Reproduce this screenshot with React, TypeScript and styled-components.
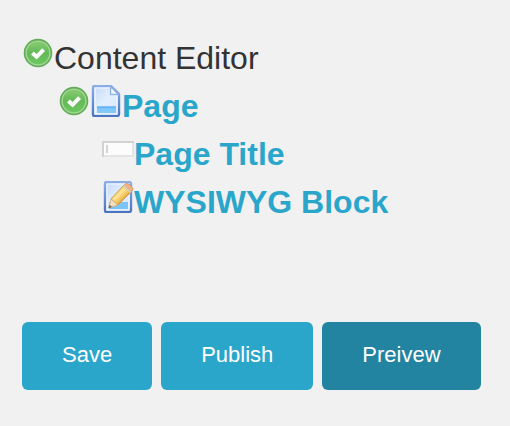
import React from "react";
import styled, { createGlobalStyle } from "styled-components";

const GlobalStyle = createGlobalStyle`
  * { box-sizing: border-box; }
  body {
    margin: 0;
    background: #f1f1f1;
    font-family: "Liberation Sans", Arial, sans-serif;
    color: #333333;
  }
`;

const Panel = styled.main`
  padding: 34px 22px 36px;
`;

const Tree = styled.ul`
  list-style: none;
  margin: 0;
  padding: 0;
  font-size: 32px;
  line-height: 48px;
`;

const Branch = styled(Tree)<{ $indent: number }>`
  padding-left: ${(p) => p.$indent}px;
`;

const Row = styled.div`
  display: flex;
  align-items: baseline;
  white-space: nowrap;
`;

const Icon = styled.svg`
  flex: none;
  width: 32px;
  height: 32px;
`;

const NodeLink = styled.a`
  color: #2ba6cb;
  font-weight: bold;
  text-decoration: none;
`;

const Actions = styled.div`
  display: flex;
  flex-wrap: wrap;
  gap: 9px;
  margin-top: 96px;
`;

const ActionButton = styled.button<{ $active?: boolean }>`
  border: 0;
  border-radius: 6px;
  padding: 20px 40px 22px;
  background: ${(p) => (p.$active ? "#2284a1" : "#2ba6cb")};
  color: #ffffff;
  font-family: inherit;
  font-size: 22px;
  line-height: 26px;
  cursor: pointer;
`;

const IconPaints = () => (
  <defs>
    <linearGradient id="checkFill" x1="0" y1="0" x2="0" y2="1">
      <stop offset="0" stopColor="#86cb70" />
      <stop offset="0.5" stopColor="#63b957" />
      <stop offset="1" stopColor="#6cc860" />
    </linearGradient>
    <linearGradient id="sheetFill" x1="0" y1="0" x2="1" y2="1">
      <stop offset="0" stopColor="#c3d9f7" />
      <stop offset="0.5" stopColor="#e4effc" />
      <stop offset="1" stopColor="#cfe4fa" />
    </linearGradient>
    <linearGradient id="sheetEdge" x1="0" y1="0" x2="0" y2="1">
      <stop offset="0" stopColor="#8badE4" />
      <stop offset="1" stopColor="#4b74c0" />
    </linearGradient>
    <linearGradient id="pencilBody" x1="0.25" y1="0.25" x2="0.75" y2="0.75">
      <stop offset="0" stopColor="#e9b95a" />
      <stop offset="0.35" stopColor="#ffe694" />
      <stop offset="0.7" stopColor="#f0bf56" />
      <stop offset="1" stopColor="#b98344" />
    </linearGradient>
  </defs>
);

const CheckIcon = () => (
  <Icon viewBox="0 0 32 32" aria-hidden="true">
    <IconPaints />
    <circle cx="16" cy="16" r="14.3" fill="#62ac58" />
    <circle cx="16" cy="16" r="12.6" fill="#a3d694" />
    <circle cx="16" cy="16" r="11.2" fill="url(#checkFill)" />
    <path d="M10.4 16 14.6 19.8 21.6 12.6" fill="none" stroke="#ffffff" strokeWidth="4" />
  </Icon>
);

const PageIcon = () => (
  <Icon viewBox="0 0 32 32" aria-hidden="true">
    <IconPaints />
    <path
      d="M4 1H21L29 9V29Q29 31 27 31H4Q3 31 3 29V3Q3 1 4 1Z"
      fill="url(#sheetFill)"
      stroke="url(#sheetEdge)"
      strokeWidth="2.4"
    />
    <path d="M5 3H20V10H27V29H5Z" fill="none" stroke="#f1f7ff" strokeWidth="1.2" />
    <path d="M20.5 1.5V9.5H28.5Z" fill="#f3f8ff" stroke="#8eb2e8" strokeWidth="1.4" />
    <path d="M7 21H26V28H7Z" fill="#83c8fa" />
    <path d="M7 22.5H26" stroke="#67b5f5" strokeWidth="1.6" />
  </Icon>
);

const EditIcon = () => (
  <Icon viewBox="0 0 32 32" aria-hidden="true">
    <IconPaints />
    <path
      d="M4 1H27Q29 1 29 3V29Q29 31 27 31H4Q3 31 3 29V3Q3 1 4 1Z"
      fill="url(#sheetFill)"
      stroke="url(#sheetEdge)"
      strokeWidth="2.4"
    />
    <path d="M5 3H27V29H5Z" fill="none" stroke="#f1f7ff" strokeWidth="1.2" />
    <path d="M7 21H26V28H7Z" fill="#7cc3f8" />
    <path d="M9 18 21.5 4.5 29 11 16 24Z" fill="url(#pencilBody)" stroke="#cf9d50" strokeWidth="1" />
    <path
      d="M21.5 4.5 23.6 2.6Q25.2 1.6 27 3.2L30.4 6.4Q31.6 8 30.6 9.4L29 11Z"
      fill="#eeb183"
      stroke="#cf946a"
      strokeWidth="0.8"
    />
    <path d="M20.6 5.5 22 4.1 29.4 10.7 28 12Z" fill="#d9cfb4" />
    <path d="M9 18 16 24 6.6 27Z" fill="#f5dfba" stroke="#cda878" strokeWidth="0.8" />
    <path d="M7.6 23.8 10 26 6.4 27.2Z" fill="#6b625b" />
  </Icon>
);

const FieldIcon = () => (
  <Icon viewBox="0 0 32 32" aria-hidden="true">
    <path d="M0 8H32V24H0Z" fill="#e5e5e5" />
    <path d="M0 8H32V10H2V24H0Z" fill="#d2d2d2" />
    <path d="M2 10H30V22H2Z" fill="#fcfcfc" />
    <path d="M5 12V20" stroke="#d4d4d4" strokeWidth="2" />
  </Icon>
);

export default function App() {
  return (
    <>
      <GlobalStyle />
      <Panel>
        <Tree>
          <li>
            <Row><CheckIcon /><span>Content Editor</span></Row>
            <Branch $indent={36}>
              <li>
                <Row><CheckIcon /><PageIcon /><NodeLink href="#page">Page</NodeLink></Row>
                <Branch $indent={44}>
                  <li><Row><FieldIcon /><NodeLink href="#page-title">Page Title</NodeLink></Row></li>
                  <li><Row><EditIcon /><NodeLink href="#wysiwyg-block">WYSIWYG Block</NodeLink></Row></li>
                </Branch>
              </li>
            </Branch>
          </li>
        </Tree>
        <Actions>
          <ActionButton type="button">Save</ActionButton>
          <ActionButton type="button">Publish</ActionButton>
          <ActionButton type="button" $active>Preivew</ActionButton>
        </Actions>
      </Panel>
    </>
  );
}
